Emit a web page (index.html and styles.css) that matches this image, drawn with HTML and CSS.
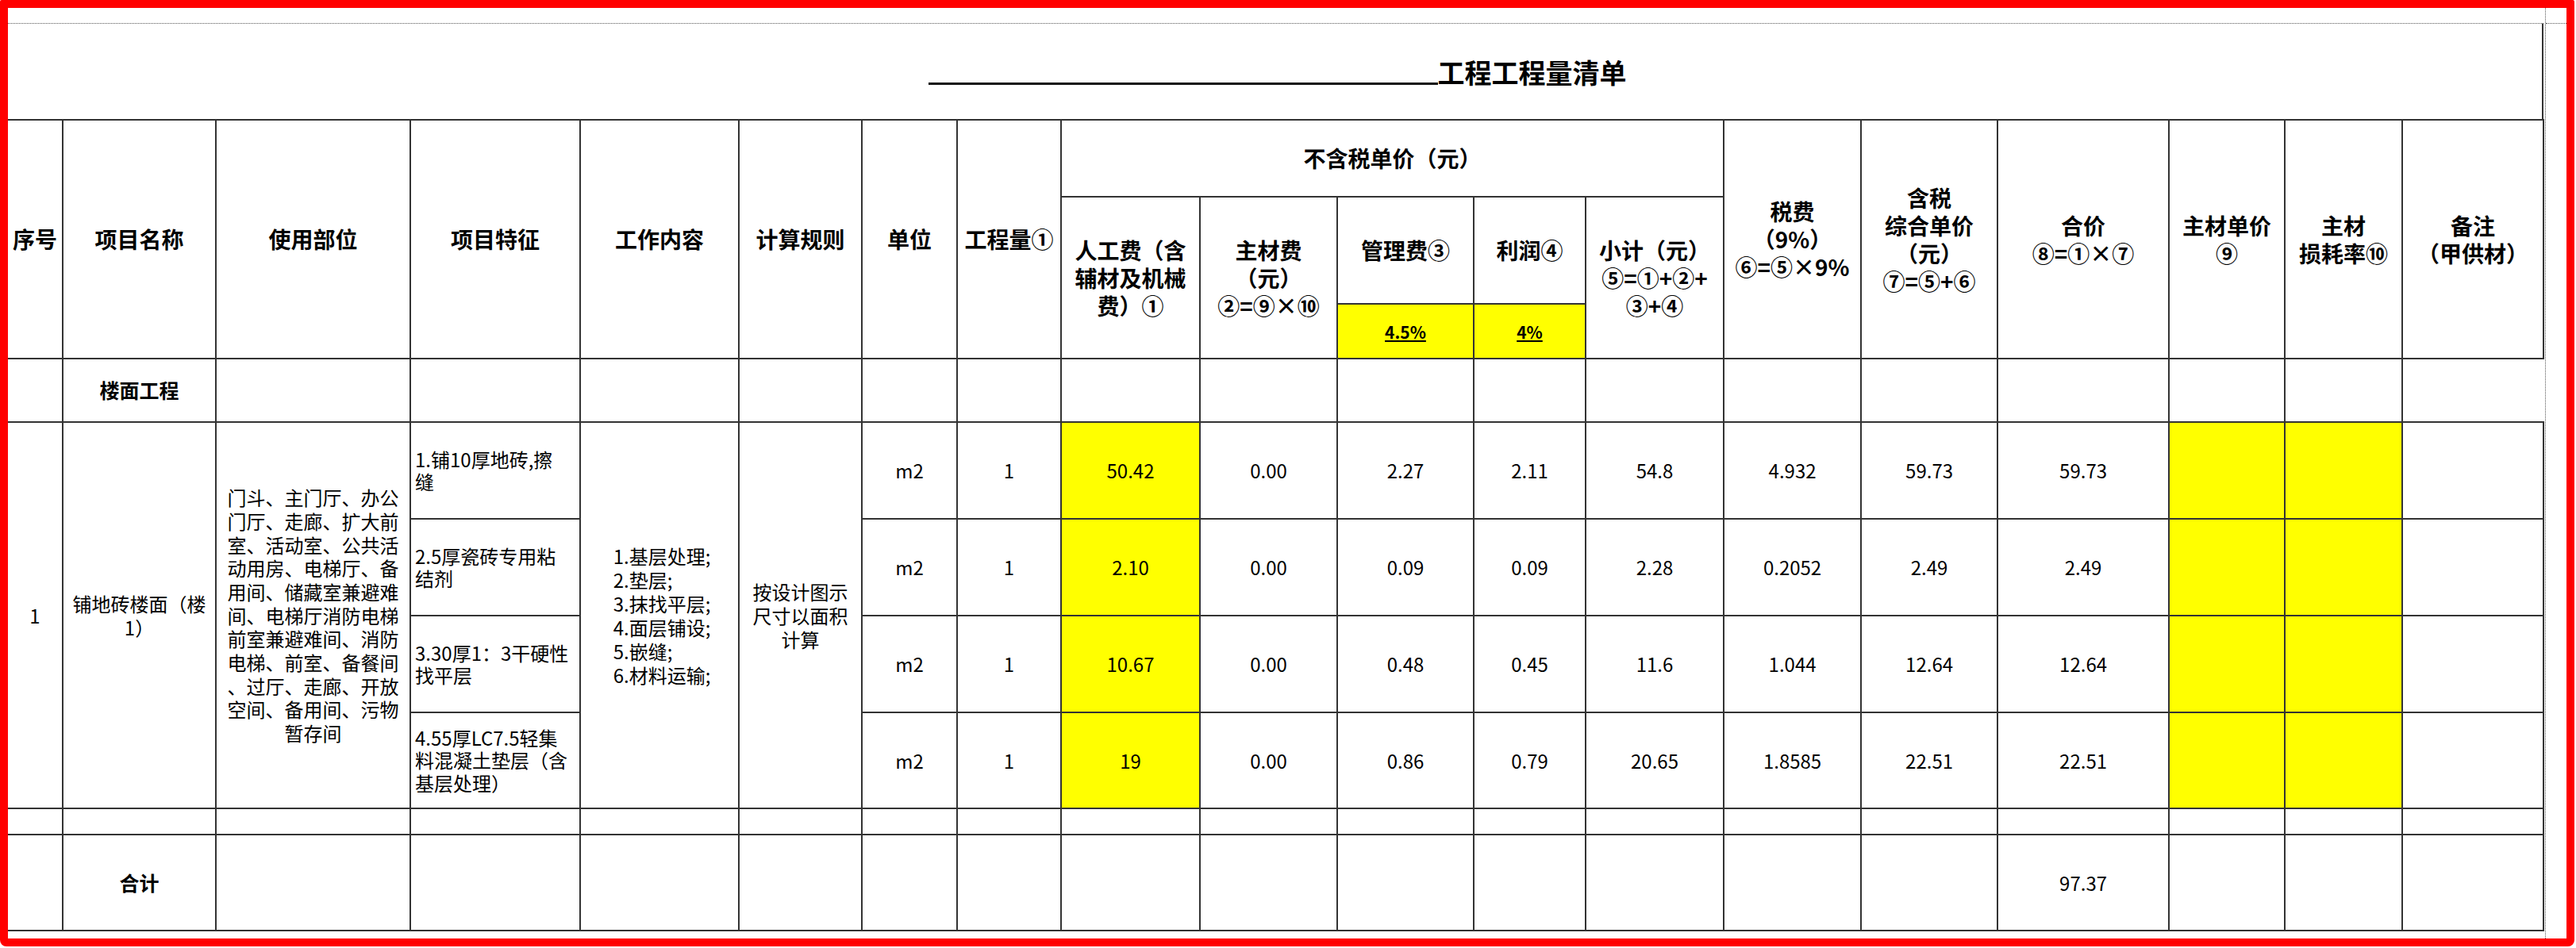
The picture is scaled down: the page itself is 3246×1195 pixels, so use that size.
FILE: index.html
```html
<!DOCTYPE html>
<html lang="zh-CN">
<head>
<meta charset="utf-8">
<title>工程工程量清单</title>
<link rel="stylesheet" href="styles.css">
</head>
<body>
<div class="frame">
  <div class="sheet">
    <div class="title">
      <div class="title-line"><span class="blank"></span><span class="title-text">工程工程量清单</span></div>
    </div>
    <table class="boq">
      <colgroup>
        <col class="c1"><col class="c2"><col class="c3"><col class="c4"><col class="c5"><col class="c6"><col class="c7"><col class="c8"><col class="c9"><col class="c10"><col class="c11"><col class="c12"><col class="c13"><col class="c14"><col class="c15"><col class="c16"><col class="c17"><col class="c18"><col class="c19">
      </colgroup>
      <thead>
        <tr class="r-a">
          <th rowspan="3">序号</th>
          <th rowspan="3">项目名称</th>
          <th rowspan="3">使用部位</th>
          <th rowspan="3">项目特征</th>
          <th rowspan="3">工作内容</th>
          <th rowspan="3">计算规则</th>
          <th rowspan="4">单位</th>
          <th rowspan="3">工程量①</th>
          <th colspan="5">不含税单价（元）</th>
          <th rowspan="3">税费<br>（9%）<br>⑥=⑤×9%</th>
          <th rowspan="3">含税<br>综合单价<br>（元）<br>⑦=⑤+⑥</th>
          <th rowspan="3">合价<br>⑧=①×⑦</th>
          <th rowspan="3">主材单价<br>⑨</th>
          <th rowspan="3">主材<br>损耗率⑩</th>
          <th rowspan="3">备注<br>（甲供材）</th>
        </tr>
        <tr class="r-b">
          <th rowspan="2">人工费（含<br>辅材及机械<br>费）①</th>
          <th rowspan="2">主材费<br>（元）<br>②=⑨×⑩</th>
          <th>管理费③</th>
          <th>利润④</th>
          <th rowspan="2">小计（元）<br>⑤=①+②+<br>③+④</th>
        </tr>
        <tr class="r-c">
          <th class="y pct"><u>4.5%</u></th>
          <th class="y pct"><u>4%</u></th>
        </tr>
      </thead>
      <tbody>
        <tr class="r-d">
          <td></td><td class="b">楼面工程</td><td></td><td></td><td></td><td></td>
          <td></td><td></td><td></td><td></td><td></td><td></td>
          <td></td><td></td><td></td><td></td><td></td><td></td>
        </tr>
        <tr class="r-e">
          <td rowspan="4">1</td>
          <td rowspan="4">铺地砖楼面（楼1）</td>
          <td rowspan="4" class="use">门斗、主门厅、办公<br>门厅、走廊、扩大前<br>室、活动室、公共活<br>动用房、电梯厅、备<br>用间、储藏室兼避难<br>间、电梯厅消防电梯<br>前室兼避难间、消防<br>电梯、前室、备餐间<br>、过厅、走廊、开放<br>空间、备用间、污物<br>暂存间</td>
          <td class="feat">1.铺10厚地砖,擦<br>缝</td>
          <td rowspan="4"><div class="work">1.基层处理;<br>2.垫层;<br>3.抹找平层;<br>4.面层铺设;<br>5.嵌缝;<br>6.材料运输;</div></td>
          <td rowspan="4" class="rule">按设计图示<br>尺寸以面积<br>计算</td>
          <td>m2</td><td>1</td><td class="y">50.42</td><td>0.00</td><td>2.27</td><td>2.11</td><td>54.8</td><td>4.932</td><td>59.73</td><td>59.73</td><td class="y"></td><td class="y"></td><td></td>
        </tr>
        <tr class="r-e">
          <td class="feat">2.5厚瓷砖专用粘<br>结剂</td>
          <td>m2</td><td>1</td><td class="y">2.10</td><td>0.00</td><td>0.09</td><td>0.09</td><td>2.28</td><td>0.2052</td><td>2.49</td><td>2.49</td><td class="y"></td><td class="y"></td><td></td>
        </tr>
        <tr class="r-e">
          <td class="feat">3.30厚1：3干硬性<br>找平层</td>
          <td>m2</td><td>1</td><td class="y">10.67</td><td>0.00</td><td>0.48</td><td>0.45</td><td>11.6</td><td>1.044</td><td>12.64</td><td>12.64</td><td class="y"></td><td class="y"></td><td></td>
        </tr>
        <tr class="r-e4">
          <td class="feat">4.55厚LC7.5轻集<br>料混凝土垫层（含<br>基层处理）</td>
          <td>m2</td><td>1</td><td class="y">19</td><td>0.00</td><td>0.86</td><td>0.79</td><td>20.65</td><td>1.8585</td><td>22.51</td><td>22.51</td><td class="y"></td><td class="y"></td><td></td>
        </tr>
        <tr class="r-f">
          <td></td><td></td><td></td><td></td><td></td><td></td><td></td><td></td><td></td><td></td>
          <td></td><td></td><td></td><td></td><td></td><td></td><td></td><td></td><td></td>
        </tr>
        <tr class="r-g">
          <td></td><td class="b">合计</td><td></td><td></td><td></td><td></td><td></td><td></td><td></td><td></td>
          <td></td><td></td><td></td><td></td><td></td><td>97.37</td><td></td><td></td><td></td>
        </tr>
      </tbody>
    </table>
  </div>
  <div class="gutter"><div class="gutter-line"></div></div>
</div>
</body>
</html>
```

FILE: styles.css
```css
html, body {
  margin: 0;
  padding: 0;
  background: #fff;
}

body {
  font-family: "Noto Sans CJK SC", "Noto Sans", sans-serif;
  color: #000;
}

.frame {
  width: 3244px;
  height: 1193px;
  box-sizing: border-box;
  border: 10px solid #ff0000;
  border-radius: 2px 2px 8px 8px;
  display: flex;
}

.sheet {
  width: 3198px;
  box-sizing: border-box;
  border-right: 1px dotted #555;
  padding-top: 19px;
}

.gutter {
  flex: 1;
  padding-top: 19px;
}

.gutter-line {
  border-top: 1px dotted #555;
}

.title {
  width: 3195px;
  height: 121px;
  box-sizing: border-box;
  border-top: 1px dotted #555;
  border-right: 2px solid #333;
  display: flex;
  justify-content: center;
  align-items: center;
}

.title-line {
  display: flex;
  align-items: flex-end;
  padding-left: 6px;
  padding-top: 2px;
}

.blank {
  width: 642px;
  border-bottom: 3px solid #111;
  margin-bottom: 1px;
}

.title-text {
  font-size: 34px;
  line-height: 34px;
  font-weight: 700;
}

.boq {
  border-collapse: collapse;
  table-layout: fixed;
  width: 3196px;
  border-left: 2px hidden;
}

.c1 { width: 69px; }
.c2 { width: 193px; }
.c3 { width: 245px; }
.c4 { width: 214px; }
.c5 { width: 200px; }
.c6 { width: 155px; }
.c7 { width: 120px; }
.c8 { width: 131px; }
.c9 { width: 175px; }
.c10 { width: 173px; }
.c11 { width: 172px; }
.c12 { width: 141px; }
.c13 { width: 174px; }
.c14 { width: 173px; }
.c15 { width: 172px; }
.c16 { width: 216px; }
.c17 { width: 146px; }
.c18 { width: 148px; }
.c19 { width: 178px; }

.boq th,
.boq td {
  border: 2px solid #333;
  padding: 0 3px;
  text-align: center;
  vertical-align: middle;
  overflow: hidden;
}

.boq th {
  font-size: 28px;
  line-height: 35px;
  font-weight: 700;
  white-space: nowrap;
}

.boq td {
  font-size: 24px;
  line-height: 29.6px;
  font-weight: 400;
}

.r-a { height: 97px; }
.r-b { height: 135px; }
.r-c { height: 69px; }
.r-d { height: 80px; }
.r-e { height: 122px; }
.r-e4 { height: 121px; }
.r-f { height: 33px; }
.r-g { height: 121px; }

.boq .y {
  background: #ffff00;
}

.boq .pct {
  font-size: 21px;
  line-height: 26px;
}

.boq .b {
  font-weight: 700;
  font-size: 25px;
}

.boq .use {
  white-space: nowrap;
  line-height: 29.7px;
}

.boq .feat {
  text-align: left;
  padding-left: 5px;
  white-space: nowrap;
  line-height: 28.4px;
}

.work {
  display: inline-block;
  text-align: left;
  white-space: nowrap;
  line-height: 30px;
  margin-left: 6px;
}

.boq .rule {
  white-space: nowrap;
  line-height: 30px;
}
```
